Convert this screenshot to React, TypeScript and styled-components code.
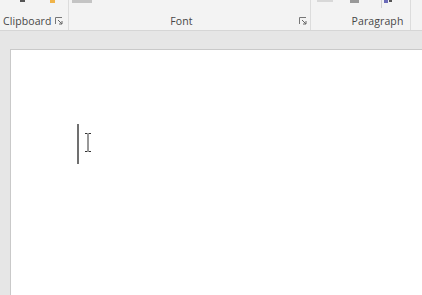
import styled, { createGlobalStyle } from "styled-components";

const GlobalStyle = createGlobalStyle`
  html, body {
    margin: 0;
    padding: 0;
    background: #e6e6e6;
    overflow: hidden;
  }
  body {
    font-family: "Open Sans", "Noto Sans", sans-serif;
  }
`;

const Window = styled.div`
  width: 422px;
  height: 295px;
  display: flex;
  flex-direction: column;
  background: #e6e6e6;
`;

const Ribbon = styled.div`
  height: 30px;
  display: flex;
  background: #f3f3f3;
  border-bottom: 1px solid #d6d6d6;
  flex-shrink: 0;
`;

const Group = styled.div<{ $width: number }>`
  width: ${(p) => p.$width}px;
  flex-shrink: 0;
  position: relative;
  border-right: 1px solid #dcdcdc;
  display: flex;
  flex-direction: column;
  justify-content: flex-end;
  box-sizing: border-box;
`;

const Controls = styled.div`
  flex: 1;
  position: relative;
`;

const LabelRow = styled.div<{ $shift?: number }>`
  height: 18px;
  display: flex;
  align-items: center;
  justify-content: ${(p) => (p.$shift === undefined ? "flex-start" : "center")};
  position: relative;
  padding-left: ${(p) => (p.$shift === undefined ? 3 : 0)}px;
  padding-top: 3px;
  margin-left: ${(p) => p.$shift || 0}px;
`;

const Label = styled.span`
  font-size: 10.5px;
  color: #474747;
  letter-spacing: 0.1px;
`;

const Launcher = styled.svg`
  position: absolute;
  right: 4px;
  top: 8px;
`;

const Stub = styled.div<{ $x: number; $w: number; $h: number; $c: string }>`
  position: absolute;
  top: 0;
  left: ${(p) => p.$x}px;
  width: ${(p) => p.$w}px;
  height: ${(p) => p.$h}px;
  background: ${(p) => p.$c};
`;

const Workspace = styled.div`
  flex: 1;
  padding: 18px 0 0 10px;
  display: flex;
`;

const Page = styled.div`
  flex: 1;
  background: #fff;
  border-top: 1px solid #c9c9c9;
  border-left: 1px solid #c9c9c9;
  position: relative;
  padding: 74px 0 0 66px;
`;

const Caret = styled.div`
  width: 1.5px;
  height: 40px;
  background: #707070;
`;

const IBeam = styled.svg`
  position: absolute;
  left: 73px;
  top: 83px;
`;

function DialogLauncher({ right = 4 }: { right?: number }) {
  return (
    <Launcher width="8" height="8" viewBox="0 0 8 8" style={{ right }}>
      <path d="M0.5 7V0.5H7" stroke="#777" fill="none" />
      <path d="M3 3L7 7M7 4V7H4" stroke="#666" fill="none" />
    </Launcher>
  );
}

export default function App() {
  return (
    <>
      <GlobalStyle />
      <Window>
        <Ribbon>
          <Group $width={69}>
            <Controls>
              <Stub $x={20} $w={5} $h={2} $c="#555" />
              <Stub $x={50} $w={5} $h={3} $c="#f0b44a" />
            </Controls>
            <LabelRow>
              <Label>Clipboard</Label>
              <DialogLauncher right={5} />
            </LabelRow>
          </Group>
          <Group $width={242}>
            <Controls>
              <Stub $x={3} $w={20} $h={3} $c="#c4c4c4" />
            </Controls>
            <LabelRow $shift={-16}>
              <Label>Font</Label>
              <DialogLauncher right={3} />
            </LabelRow>
          </Group>
          <Group $width={100}>
            <Controls>
              <Stub $x={6} $w={16} $h={1} $c="#888" />
              <Stub $x={6} $w={16} $h={2} $c="#d8d8d8" />
              <Stub $x={39} $w={9} $h={3} $c="#999" />
              <Stub $x={70} $w={1} $h={8} $c="#d0d0d0" />
              <Stub $x={73} $w={4} $h={3} $c="#6b6bb8" />
              <Stub $x={78} $w={3} $h={2} $c="#555" />
            </Controls>
            <LabelRow $shift={34}>
              <Label>Paragraph</Label>
            </LabelRow>
          </Group>
        </Ribbon>
        <Workspace>
          <Page>
            <Caret />
            <IBeam width="8" height="19" viewBox="0 0 8 19">
              <path
                d="M1 0.5H3.5M4.5 0.5H7M4 1V18M1 18.5H3.5M4.5 18.5H7"
                stroke="#333"
                strokeWidth="1"
                fill="none"
              />
            </IBeam>
          </Page>
        </Workspace>
      </Window>
    </>
  );
}
